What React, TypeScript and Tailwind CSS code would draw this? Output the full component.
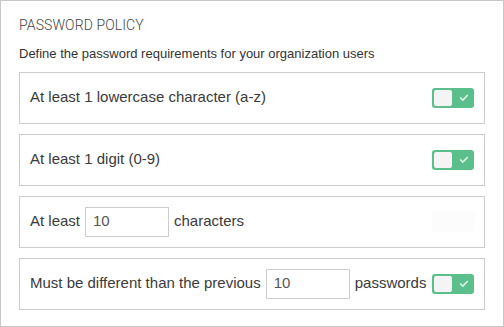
import { Check } from 'lucide-react'

function Toggle({ on = true }: { on?: boolean }) {
  if (!on) {
    return <div className="w-[42px] h-[21px] rounded-[3px] bg-[#fcfcfc] shrink-0" />
  }
  return (
    <div className="w-[42px] h-[20px] rounded-[3px] bg-[#5bbf8c] shrink-0 flex items-center pl-[2px]">
      <div className="w-[18px] h-[16px] rounded-[2px] bg-[#f4f4f4]" />
      <Check className="w-[10px] h-[10px] text-[#dff3e8] ml-[7px]" strokeWidth={4} />
    </div>
  )
}

function NumInput({ value }: { value: string }) {
  return (
    <div className="w-[84px] h-[30px] border border-[#cccccc] flex items-center px-[7px] text-[15px] text-[#555555] shrink-0">
      {value}
    </div>
  )
}

function Row({ children }: { children: React.ReactNode }) {
  return (
    <div className="h-[52px] border border-[#cccccc] flex items-center justify-between pl-[10px] pr-[10px]">
      {children}
    </div>
  )
}

export default function App() {
  return (
    <div
      className="w-[504px] h-[327px] border border-[#c8c8c8] bg-white pl-[18px] pr-[18px] text-[#3a3a3a]"
      style={{ fontFamily: '"Liberation Sans", Arial, sans-serif' }}
    >
      <div className="pt-[14px] text-[14px] font-light text-[#444444] tracking-[0.1px]" style={{ fontFamily: 'Roboto, sans-serif' }}>
        PASSWORD POLICY
      </div>
      <div className="mt-[8px] text-[13px] text-[#333333]">
        Define the password requirements for your organization users
      </div>
      <div className="mt-[8px] flex flex-col gap-[10px] text-[15px] text-[#3a3a3a]">
        <Row>
          <span>At least 1 lowercase character (a-z)</span>
          <Toggle />
        </Row>
        <Row>
          <span>At least 1 digit (0-9)</span>
          <Toggle />
        </Row>
        <Row>
          <div className="flex items-center gap-[5px]">
            <span>At least</span>
            <NumInput value="10" />
            <span>characters</span>
          </div>
          <Toggle on={false} />
        </Row>
        <Row>
          <div className="flex items-center gap-[5px]">
            <span>Must be different than the previous</span>
            <NumInput value="10" />
            <span>passwords</span>
          </div>
          <Toggle />
        </Row>
      </div>
    </div>
  )
}
